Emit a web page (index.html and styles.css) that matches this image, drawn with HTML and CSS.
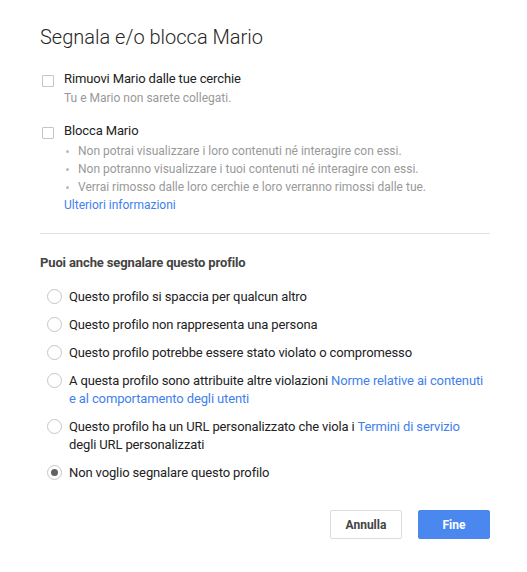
FILE: index.html
```html
<!DOCTYPE html>
<html lang="it">
<head>
    <meta charset="UTF-8">
    <meta name="viewport" content="width=device-width, initial-scale=1.0">
    <title>Segnala e/o blocca Mario</title>
    <link rel="stylesheet" href="styles.css">
</head>
<body>
    <div class="dialog">
        <h1>Segnala e/o blocca Mario</h1>

        <div class="block-options">
            <label class="option">
                <input type="checkbox" class="check">
                <span class="option-body">
                    <span class="option-title">Rimuovi Mario dalle tue cerchie</span>
                    <span class="option-desc">Tu e Mario non sarete collegati.</span>
                </span>
            </label>

            <label class="option">
                <input type="checkbox" class="check">
                <span class="option-body">
                    <span class="option-title">Blocca Mario</span>
                    <span class="bullets">
                        <span class="bullet">Non potrai visualizzare i loro contenuti né interagire con essi.</span>
                        <span class="bullet">Non potranno visualizzare i tuoi contenuti né interagire con essi.</span>
                        <span class="bullet">Verrai rimosso dalle loro cerchie e loro verranno rimossi dalle tue.</span>
                    </span>
                    <a href="#" class="link small">Ulteriori informazioni</a>
                </span>
            </label>
        </div>

        <div class="report">
            <h2>Puoi anche segnalare questo profilo</h2>

            <label class="radio-row">
                <input type="radio" name="reason" class="radio">
                <span>Questo profilo si spaccia per qualcun altro</span>
            </label>
            <label class="radio-row">
                <input type="radio" name="reason" class="radio">
                <span>Questo profilo non rappresenta una persona</span>
            </label>
            <label class="radio-row">
                <input type="radio" name="reason" class="radio">
                <span>Questo profilo potrebbe essere stato violato o compromesso</span>
            </label>
            <label class="radio-row">
                <input type="radio" name="reason" class="radio">
                <span>A questa profilo sono attribuite altre violazioni <a href="#" class="link">Norme relative ai contenuti e al comportamento degli utenti</a></span>
            </label>
            <label class="radio-row">
                <input type="radio" name="reason" class="radio">
                <span>Questo profilo ha un URL personalizzato che viola i <a href="#" class="link">Termini di servizio</a> degli URL personalizzati</span>
            </label>
            <label class="radio-row">
                <input type="radio" name="reason" class="radio" checked>
                <span>Non voglio segnalare questo profilo</span>
            </label>
        </div>

        <div class="actions">
            <button class="btn btn-cancel">Annulla</button>
            <button class="btn btn-done">Fine</button>
        </div>
    </div>
</body>
</html>
```

FILE: styles.css
```css
body {
    margin: 0;
    background-color: #fff;
    font-family: Roboto, "Noto Sans", Arial, sans-serif;
    font-size: 13px;
    line-height: 18px;
    letter-spacing: -0.13px;
    color: #222;
}

.dialog {
    padding: 25px 37px 0 40px;
}

h1 {
    margin: 0;
    font-size: 20px;
    line-height: 24px;
    font-weight: 300;
    letter-spacing: 0;
    color: #262626;
}

.block-options {
    margin-top: 21px;
    padding-bottom: 19px;
    border-bottom: 1px solid #e0e0e0;
}

.option {
    display: flex;
    gap: 10px;
    margin-bottom: 15px;
    cursor: pointer;
}

.option:last-child {
    margin-bottom: 0;
}

.check {
    appearance: none;
    flex: none;
    width: 12px;
    height: 12px;
    margin: 5px 0 0 2px;
    border: 1px solid #c6c6c6;
    border-radius: 1px;
    background: #fff;
}

.option-body {
    display: flex;
    flex-direction: column;
}

.option-desc {
    margin-top: 1px;
    font-size: 12px;
    letter-spacing: 0;
    color: #999;
}

.bullets {
    display: flex;
    flex-direction: column;
    margin-top: 2px;
    font-size: 12px;
    letter-spacing: 0;
    color: #999;
}

.bullet {
    position: relative;
    padding-left: 14px;
}

.bullet::before {
    content: "";
    position: absolute;
    left: 2px;
    top: 8px;
    width: 3px;
    height: 3px;
    border-radius: 50%;
    background: #bbb;
}

.link {
    color: #427fed;
    text-decoration: none;
}

.link.small {
    font-size: 12px;
    letter-spacing: 0;
}

.report {
    padding-top: 20px;
}

h2 {
    margin: 0 0 16px;
    font-size: 13px;
    line-height: 18px;
    font-weight: bold;
    color: #444;
}

.radio-row {
    display: flex;
    gap: 7px;
    margin-bottom: 10px;
    cursor: pointer;
}

.radio {
    appearance: none;
    flex: none;
    width: 15px;
    height: 15px;
    margin: 1px 0 0 7px;
    border: 1px solid #c6c6c6;
    border-radius: 50%;
    background: #fff;
    display: flex;
    align-items: center;
    justify-content: center;
}

.radio:checked::after {
    content: "";
    width: 7px;
    height: 7px;
    border-radius: 50%;
    background: #616161;
}

.actions {
    display: flex;
    justify-content: flex-end;
    gap: 16px;
    margin-top: 28px;
}

.btn {
    width: 72px;
    height: 29px;
    border-radius: 2px;
    font-family: Roboto, Arial, sans-serif;
    font-size: 12px;
    font-weight: bold;
    cursor: pointer;
}

.btn-cancel {
    background: #fff;
    border: 1px solid #dcdcdc;
    color: #444;
}

.btn-done {
    background: #4a87ee;
    border: 1px solid #4a87ee;
    color: #fff;
}
```
